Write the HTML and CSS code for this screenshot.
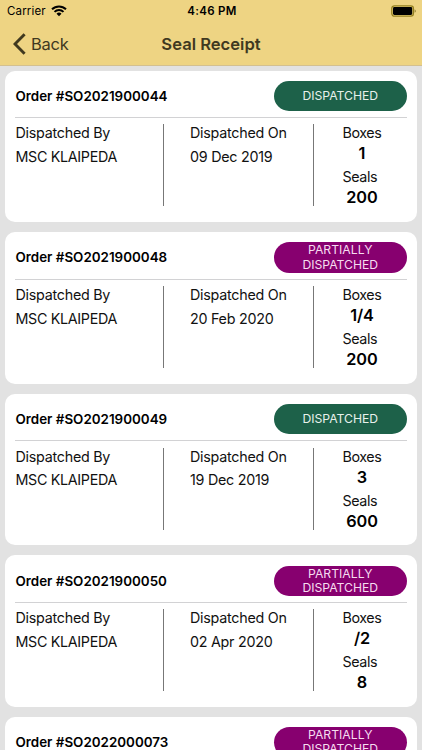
FILE: index.html
```html
<!DOCTYPE html>
<html>
	<head>
		<meta charset="utf-8">
		<title>Seal Receipt</title>
		<link rel="stylesheet" href="styles.css">
	</head>
	<body>
		<div class="header">
			<div class="status">
				<div class="carrier">
					<span>Carrier</span>
					<svg width="16" height="12" viewBox="0 0 16 12">
						<path d="M1 4.3a10 10 0 0 1 14 0M3.5 6.9a6.4 6.4 0 0 1 9 0" fill="none" stroke="#000" stroke-width="2"/>
						<path d="M8 11.2L5.5 8.8a3.6 3.6 0 0 1 5 0z"/>
					</svg>
				</div>
				<div class="time">4:46 PM</div>
				<div class="battery">
					<svg width="26" height="12" viewBox="0 0 26 12">
						<rect x=".8" y=".8" width="21.6" height="10.4" rx="2.6" fill="none" stroke="#94801f" stroke-width="1.3"/>
						<rect x="2" y="2.1" width="19.2" height="7.8" rx="1.3"/>
						<path d="M23.7 4.2q2 1.8 0 3.6z" fill="#77651c"/>
					</svg>
				</div>
			</div>
			<div class="nav">
				<a class="back">
					<svg width="13" height="22" viewBox="0 0 13 22"><path d="M11.6 1.2L2 11l9.6 9.8" fill="none" stroke="#40391f" stroke-width="2.9"/></svg>
					<span>Back</span>
				</a>
				<h1>Seal Receipt</h1>
			</div>
		</div>
		<ul class="list">
			<li class="card">
				<div class="top"><h2>Order #SO2021900044</h2><span class="tag">DISPATCHED</span></div>
				<div class="info">
					<div class="by"><p>Dispatched By</p><p>MSC KLAIPEDA</p></div>
					<div class="on"><p>Dispatched On</p><p>09 Dec 2019</p></div>
					<div class="count"><div><p>Boxes</p><b>1</b><p>Seals</p><b>200</b></div></div>
				</div>
			</li>
			<li class="card">
				<div class="top"><h2>Order #SO2021900048</h2><span class="tag part">PARTIALLY<br>DISPATCHED</span></div>
				<div class="info">
					<div class="by"><p>Dispatched By</p><p>MSC KLAIPEDA</p></div>
					<div class="on"><p>Dispatched On</p><p>20 Feb 2020</p></div>
					<div class="count"><div><p>Boxes</p><b>1/4</b><p>Seals</p><b>200</b></div></div>
				</div>
			</li>
			<li class="card">
				<div class="top"><h2>Order #SO2021900049</h2><span class="tag">DISPATCHED</span></div>
				<div class="info">
					<div class="by"><p>Dispatched By</p><p>MSC KLAIPEDA</p></div>
					<div class="on"><p>Dispatched On</p><p>19 Dec 2019</p></div>
					<div class="count"><div><p>Boxes</p><b>3</b><p>Seals</p><b>600</b></div></div>
				</div>
			</li>
			<li class="card">
				<div class="top"><h2>Order #SO2021900050</h2><span class="tag part">PARTIALLY<br>DISPATCHED</span></div>
				<div class="info">
					<div class="by"><p>Dispatched By</p><p>MSC KLAIPEDA</p></div>
					<div class="on"><p>Dispatched On</p><p>02 Apr 2020</p></div>
					<div class="count"><div><p>Boxes</p><b>/2</b><p>Seals</p><b>8</b></div></div>
				</div>
			</li>
			<li class="card">
				<div class="top"><h2>Order #SO2022000073</h2><span class="tag part">PARTIALLY<br>DISPATCHED</span></div>
			</li>
		</ul>
	</body>
</html>
```

FILE: styles.css
```css
*{margin: 0;padding: 0;box-sizing: border-box;}
body{
	height: 750px;
	overflow: hidden;
	display: flex;
	flex-direction: column;
	background: #e2e2e2;
	font-family: Inter,"Liberation Sans",sans-serif;
	color: #111;
}
svg{display: block;}
.header{height: 66px;flex: none;background: #eed483;border-bottom: 1px solid #d3c090;}
.status{height: 22px;display: grid;grid-template-columns: 1fr auto 1fr;align-items: center;padding: 0 5px 0 7px;font-size: 11.5px;color: #000;}
.carrier{display: flex;align-items: center;gap: 5px;letter-spacing: .15px;}
.time{font-weight: 600;letter-spacing: .3px;}
.battery{justify-self: end;}
.nav{height: 43px;display: grid;grid-template-columns: 1fr auto 1fr;align-items: center;padding: 0 13px;color: #40391f;}
.back{display: flex;align-items: center;gap: 5px;font-size: 16.5px;letter-spacing: -.25px;}
.nav h1{font-size: 16.6px;font-weight: 600;}
.list{list-style: none;flex: 1;min-height: 0;overflow: hidden;padding: 4.5px 5.3px 0 5.3px;}
.card{height: 151.5px;margin-bottom: 10.1px;padding: 10.3px 10.2px 0;background: #fff;border-radius: 10px;}
.top{height: 37.2px;display: flex;justify-content: space-between;align-items: flex-start;border-bottom: 1px solid #d2d2d4;}
.top h2{font-size: 13.4px;line-height: 30px;font-weight: 600;color: #000;}
.tag{width: 132.5px;height: 30.5px;border-radius: 16px;display: flex;align-items: center;justify-content: center;text-align: center;font-size: 12.2px;line-height: 14.3px;color: #e8f1ec;background: #1d6149;}
.part{color: #f6dcf0;background: #87006f;}
.info{height: 82px;margin-top: 6.5px;display: flex;font-size: 14.3px;letter-spacing: -.25px;}
.info p{line-height: 18px;}
.by{width: 148.5px;border-right: 1px solid #777;}
.on{width: 150px;padding-left: 26px;border-right: 1px solid #777;}
.by p+p,.on p+p{margin-top: 5.5px;}
.by p+p{letter-spacing: -.32px;}
.count{flex: 1;padding-left: 28.5px;}
.count p{letter-spacing: -.4px;}
.count div{width: 39px;}
.count b{display: flex;justify-content: center;font-size: 16.3px;line-height: 22px;font-weight: 600;letter-spacing: -.1px;color: #000;}
.count b+p{margin-top: 4px;}
```
